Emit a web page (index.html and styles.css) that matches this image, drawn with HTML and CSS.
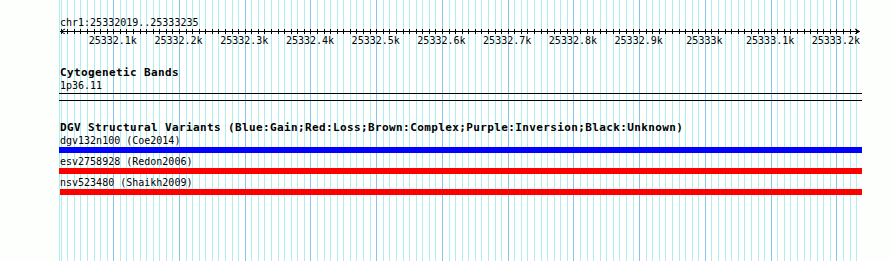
FILE: index.html
```html
<!DOCTYPE html>
<html>
<head>
<meta charset="utf-8">
<title>Genome view</title>
<link rel="stylesheet" href="styles.css">
</head>
<body>
<div class="view">
  <div class="canvas-bg"></div>
  <svg class="grid" id="grid" width="890" height="261" shape-rendering="crispEdges"></svg>
  <div class="tracks">
    <div class="ruler">
      <div class="locus">chr1:25332019..25333235</div>
      <svg class="axis" id="axis" width="804" height="6">
        <line x1="1" y1="3.5" x2="801" y2="3.5" stroke="#000" stroke-width="1" shape-rendering="crispEdges"/>
        <path d="M6 1 L1.5 3.5 L6 6" fill="none" stroke="#000" stroke-width="1"/>
        <path d="M796 1 L800.5 3.5 L796 6" fill="none" stroke="#000" stroke-width="1"/>
      </svg>
      <div class="scale">
        <span class="scale-label" style="left:52.75px">25332.1k</span>
        <span class="scale-label" style="left:118.49px">25332.2k</span>
        <span class="scale-label" style="left:184.23px">25332.3k</span>
        <span class="scale-label" style="left:249.97px">25332.4k</span>
        <span class="scale-label" style="left:315.71px">25332.5k</span>
        <span class="scale-label" style="left:381.45px">25332.6k</span>
        <span class="scale-label" style="left:447.19px">25332.7k</span>
        <span class="scale-label" style="left:512.93px">25332.8k</span>
        <span class="scale-label" style="left:578.67px">25332.9k</span>
        <span class="scale-label" style="left:644.41px">25333k</span>
        <span class="scale-label" style="left:710.15px">25333.1k</span>
        <span class="scale-label" style="left:775.89px">25333.2k</span>
      </div>
    </div>
    <section class="track cyto">
      <h2 class="track-title">Cytogenetic Bands</h2>
      <div class="feature-label">1p36.11</div>
      <div class="band"></div>
    </section>
    <section class="track dgv">
      <h2 class="track-title">DGV Structural Variants (Blue:Gain;Red:Loss;Brown:Complex;Purple:Inversion;Black:Unknown)</h2>
      <div class="feature">
        <div class="feature-label">dgv132n100 (Coe2014)</div>
        <div class="bar gain"></div>
      </div>
      <div class="feature">
        <div class="feature-label">esv2758928 (Redon2006)</div>
        <div class="bar loss"></div>
      </div>
      <div class="feature">
        <div class="feature-label">nsv523480 (Shaikh2009)</div>
        <div class="bar loss short"></div>
      </div>
    </section>
  </div>
</div>
<script src="script.js"></script>
</body>
</html>
```

FILE: styles.css
```css
body {
  margin: 0;
  background: #fcfffc;
}

.view {
  position: relative;
  width: 890px;
  height: 261px;
  overflow: hidden;
  font-family: "DejaVu Sans Mono", "Liberation Mono", monospace;
  color: #000;
}

.canvas-bg {
  position: absolute;
  left: 59px;
  top: 0;
  width: 803px;
  height: 261px;
  background: #ffffff;
}

.grid {
  position: absolute;
  left: 0;
  top: 0;
}

.tracks {
  position: relative;
  padding: 16px 0 0 60px;
}

.locus {
  font-size: 10px;
  line-height: 12px;
  height: 11px;
  padding-top: 1px;
  white-space: nowrap;
}

.axis {
  display: block;
  margin-left: -1px;
}

.scale {
  position: relative;
  height: 11px;
  padding-top: 1px;
  font-size: 10px;
  line-height: 12px;
}

.scale-label {
  position: absolute;
  top: 1px;
  transform: translateX(-50%);
  white-space: nowrap;
}

.track {
  margin-top: 20px;
}

.track-title {
  margin: 0;
  font-size: 11px;
  font-weight: bold;
  letter-spacing: 0.38px;
  line-height: 12px;
  height: 11px;
  padding-top: 1px;
  white-space: nowrap;
}

.feature-label {
  font-size: 10px;
  line-height: 12px;
  height: 11px;
  padding-top: 1px;
  white-space: nowrap;
}

.cyto .feature-label {
  margin-top: 1px;
}

.band {
  margin: 2px 0 0 -1px;
  width: 803px;
  height: 6px;
  border-top: 1px solid #000;
  border-bottom: 1px solid #000;
}

.dgv .track-title {
  margin-bottom: 1px;
}

.bar {
  margin: 1px 0 2px -1px;
  width: 803px;
  height: 6px;
}

.bar.short {
  width: 802px;
  margin-left: 0;
}

.gain {
  background: #0000ff;
}

.loss {
  background: #ff0000;
}
```

FILE: script.js
```js
(function () {
  var ns = "http://www.w3.org/2000/svg";
  var grid = document.getElementById("grid");
  var axis = document.getElementById("axis");
  function rect(parent, x, y, w, h, fill) {
    var r = document.createElementNS(ns, "rect");
    r.setAttribute("x", x);
    r.setAttribute("y", y);
    r.setAttribute("width", w);
    r.setAttribute("height", h);
    r.setAttribute("fill", fill);
    r.setAttribute("shape-rendering", "crispEdges");
    parent.appendChild(r);
  }
  rect(grid, 59, 0, 1, 261, "#afeeee");
  for (var k = 0; k <= 121; k++) {
    var bp = 1 + 10 * k;
    var c = Math.floor(60.5 + bp * 0.6574);
    var major = (bp - 81) % 100 === 0;
    rect(grid, c, 0, 1, 261, major ? "#87c6e8" : "#afeeee");
    rect(axis, c - 59, 1, 1, 5, "#000");
  }
})();
```
